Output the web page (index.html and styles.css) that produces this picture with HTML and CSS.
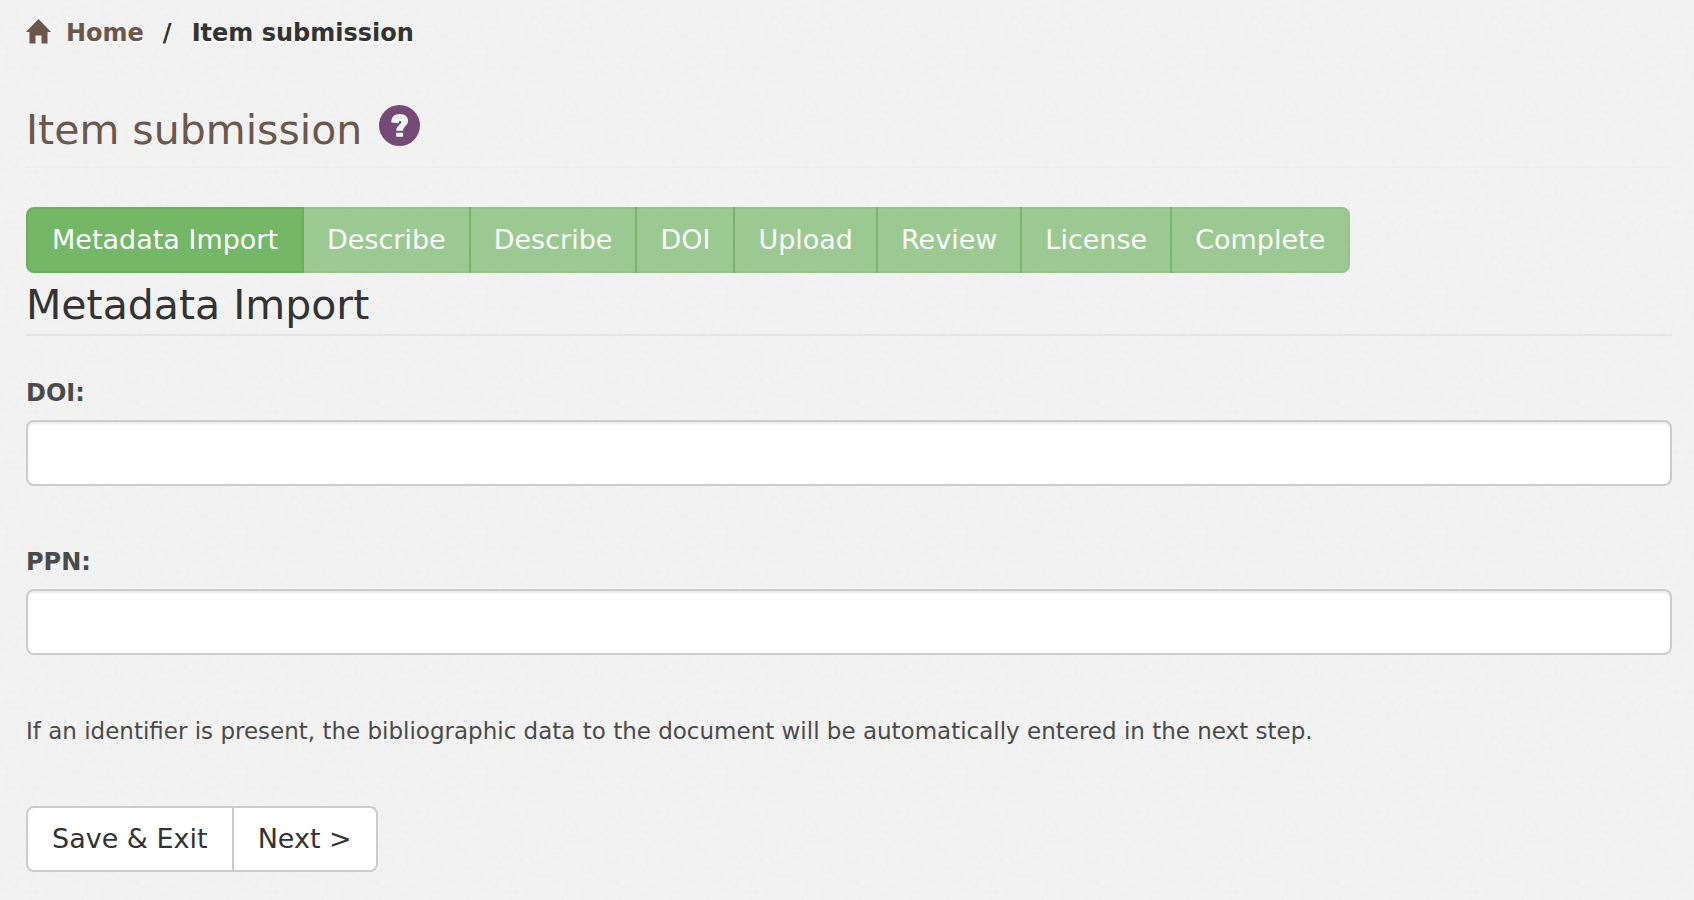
FILE: index.html
```html
<!DOCTYPE html>
<html lang="en">
<head>
<meta charset="utf-8">
<meta name="viewport" content="width=device-width, initial-scale=1">
<title>Item submission</title>
<link rel="stylesheet" href="styles.css">
</head>
<body>
<nav class="breadcrumb" aria-label="Breadcrumb">
  <svg class="home-icon" viewBox="0 0 25 25" aria-hidden="true"><path d="M12.5 0 25 13H21.500V24.500H15.500V16.500H9.500V24.500H3.500V13H0Z"/></svg>
  <a class="crumb-link" href="#">Home</a>
  <span class="crumb-separator">/</span>
  <span>Item submission</span>
</nav>
<main class="content">
  <header class="page-header">
    <h1 class="page-title">Item submission</h1>
    <a class="help" href="#" aria-label="Help">
      <svg viewBox="0 0 40 40" aria-hidden="true"><circle cx="20" cy="20" r="20"/><path class="mark" d="M12 17C12 11.500 15 8.700 20.300 8.700C25.500 8.700 28.300 11.500 28.300 15.300C28.300 20.500 23.500 20.500 23.500 25.200H16.800C16.800 20.500 21.700 19.200 21.700 16.700C21.700 15.300 19.300 15.200 19 17.800ZM16.800 27H23.500V31H16.800Z"/></svg>
    </a>
  </header>
  <form class="submission">
    <div class="steps">
      <button class="step" type="button">Metadata Import</button>
      <button class="step" type="button" disabled>Describe</button>
      <button class="step" type="button" disabled>Describe</button>
      <button class="step" type="button" disabled>DOI</button>
      <button class="step" type="button" disabled>Upload</button>
      <button class="step" type="button" disabled>Review</button>
      <button class="step" type="button" disabled>License</button>
      <button class="step" type="button" disabled>Complete</button>
    </div>
    <h2 class="section-title">Metadata Import</h2>
    <div class="field">
      <label for="doi">DOI:</label>
      <input id="doi" type="text">
    </div>
    <div class="field">
      <label for="ppn">PPN:</label>
      <input id="ppn" type="text">
    </div>
    <p class="hint">If an identifier is present, the bibliographic data to the document will be automatically entered in the next step.</p>
    <div class="actions">
      <button class="action" type="button">Save &amp; Exit</button>
      <button class="action" type="button">Next &gt;</button>
    </div>
  </form>
</main>
</body>
</html>
```
FILE: styles.css
```css
* { box-sizing: border-box; }

body {
  margin: 0;
  padding: 17px 22px 28px 26px;
  color: #333;
  background-color: #f4f4f4;
  background-image: url("data:image/svg+xml,%3Csvg xmlns='http://www.w3.org/2000/svg' width='240' height='240'%3E%3Cfilter id='n' x='0' y='0' width='100%25' height='100%25'%3E%3CfeTurbulence type='fractalNoise' baseFrequency='.2' numOctaves='3' stitchTiles='stitch'/%3E%3C/filter%3E%3Crect width='240' height='240' filter='url(%23n)' opacity='.08'/%3E%3C/svg%3E");
  font-family: Verdana, "DejaVu Sans", sans-serif;
  font-size: 24px;
  line-height: 32px;
}

button, input { font: inherit; }

.breadcrumb {
  display: flex;
  align-items: center;
  font-weight: bold;
  text-shadow: 0 2px 0 #fff;
}

.home-icon {
  width: 25px;
  height: 25px;
  margin: 0 15px 4px 0;
  fill: #6b574c;
}

.crumb-link {
  color: #6b574c;
  text-decoration: none;
}

.crumb-separator { margin: 0 20px 0 19px; }

.page-header {
  display: flex;
  align-items: center;
  gap: 17px;
  margin: 51px 0 39px;
  padding-bottom: 6px;
  border-bottom: 2px solid #eee;
}

.page-title, .section-title {
  margin: 0;
  font-size: 41px;
  font-weight: normal;
}

.page-title {
  color: #6b574c;
  line-height: 60px;
}

.help {
  display: flex;
  width: 41px;
  height: 41px;
  margin-bottom: 10px;
}

.help svg { width: 100%; fill: #754a76; }
.help .mark { fill: #f4f4f4; }

.steps, .actions { display: flex; }

.step, .action {
  height: 66px;
  padding: 0 24px;
  border: 2px solid #6ab05b;
  font-size: 27px;
}

.step {
  color: #fff;
  background: #74b766;
}

.step:disabled {
  padding: 0 23px;
  opacity: .68;
}

/* Neighbours share one border. */
.step + .step, .action + .action { margin-left: -2px; }

.step:first-child, .action:first-child { border-radius: 8px 0 0 8px; }
.step:last-child, .action:last-child { border-radius: 0 8px 8px 0; }

.section-title {
  margin-bottom: 41px;
  padding: 5px 0 2px;
  border-bottom: 2px solid #e5e5e5;
  line-height: 54px;
}

.field {
  display: grid;
  gap: 11px;
  margin-bottom: 60px;
}

.field label {
  color: #4a4a4a;
  font-weight: bold;
}

.field input {
  width: 100%;
  height: 66px;
  padding: 12px 24px;
  border: 2px solid #ccc;
  border-radius: 8px;
  background: #fff;
  box-shadow: inset 0 2px 2px rgba(0, 0, 0, .075);
}

.hint {
  margin: 0 0 59px;
  color: #4a4a4a;
  font-size: 23px;
}

.action {
  color: #333;
  background: #fff;
  border-color: #ccc;
}
```
